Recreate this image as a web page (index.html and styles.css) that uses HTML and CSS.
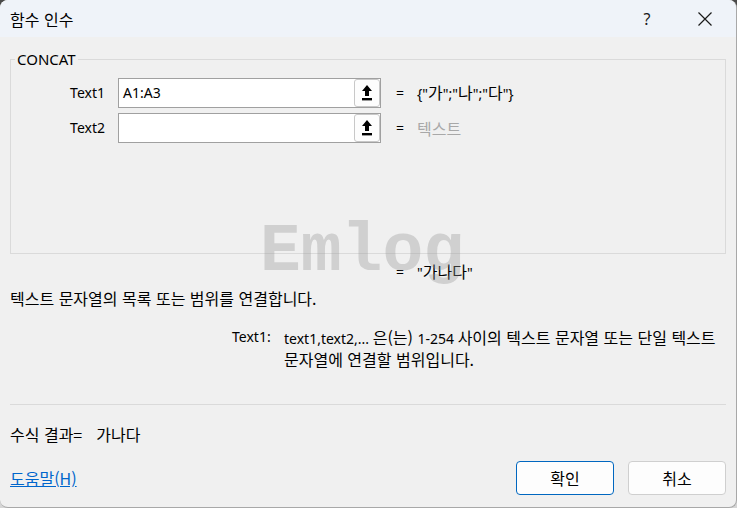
FILE: index.html
```html
<!DOCTYPE html>
<html lang="ko">
<head>
<meta charset="utf-8">
<title>함수 인수</title>
<link rel="stylesheet" href="styles.css">
</head>
<body>
<div class="window">
  <div class="titlebar">
    <span class="title ko">함수 인수</span>
    <span class="help">?</span>
    <span class="close">
      <svg width="16" height="16" viewBox="0 0 16 16"><path d="M1.5 1.5 L14.5 14.5 M14.5 1.5 L1.5 14.5" stroke="#1a1a1a" stroke-width="1.2" fill="none"/></svg>
    </span>
  </div>

  <div class="content">
    <fieldset class="group">
      <legend>CONCAT</legend>
      <div class="args">
        <label class="arg-label">Text1</label>
        <div class="ref-input">
          <span class="ref-text">A1:A3</span>
          <button class="ref-btn" type="button">
            <svg width="12" height="18" viewBox="0 0 12 18"><path d="M6 1 L11 7 H8 V12 H4 V7 H1 Z" fill="#000"/><rect x="1" y="14" width="10" height="2.4" fill="#000"/></svg>
          </button>
        </div>
        <span class="eq">=</span>
        <span class="arg-value"><span>{"</span><span class="ko">가</span><span>";"</span><span class="ko">나</span><span>";"</span><span class="ko">다</span><span>"}</span></span>

        <label class="arg-label">Text2</label>
        <div class="ref-input">
          <span class="ref-text"></span>
          <button class="ref-btn" type="button">
            <svg width="12" height="18" viewBox="0 0 12 18"><path d="M6 1 L11 7 H8 V12 H4 V7 H1 Z" fill="#000"/><rect x="1" y="14" width="10" height="2.4" fill="#000"/></svg>
          </button>
        </div>
        <span class="eq">=</span>
        <span class="arg-value muted ko">텍스트</span>
      </div>
    </fieldset>

    <div class="result-row">
      <span class="eq">=</span>
      <span class="arg-value"><span>"</span><span class="ko">가나다</span><span>"</span></span>
    </div>

    <p class="desc ko">텍스트 문자열의 목록 또는 범위를 연결합니다.</p>

    <div class="arg-help">
      <span class="arg-help-name">Text1:</span>
      <span class="arg-help-text"><span>text1,text2,... </span><span class="ko">은(는) </span><span>1-254 </span><span class="ko">사이의 텍스트 문자열 또는 단일 텍스트 문자열에 연결할 범위입니다.</span></span>
    </div>

    <div class="separator"></div>

    <div class="formula-result ko">
      <span>수식 결과=</span>
      <span class="formula-value">가나다</span>
    </div>

    <div class="footer">
      <a class="help-link ko" href="#">도움말(H)</a>
      <div class="buttons">
        <button class="btn default ko" type="button">확인</button>
        <button class="btn ko" type="button">취소</button>
      </div>
    </div>
  </div>

  <div class="watermark">Emlog</div>
</div>
</body>
</html>
```

FILE: styles.css
```css
html, body {
  margin: 0;
  padding: 0;
}

body {
  width: 737px;
  height: 508px;
  background: linear-gradient(#4a4a4a, #9a9a9a 60%, #d6d6d6);
  font-family: "Noto Sans", "Noto Sans CJK KR", sans-serif;
  font-size: 14px;
  line-height: 20px;
  color: #000;
  overflow: hidden;
}

/* hangul runs are set a little larger than the latin text */
.ko {
  font-family: "Noto Sans CJK KR", sans-serif;
  font-size: 16px;
}

.window {
  position: relative;
  width: 736px;
  height: 507px;
  background: #f0f0f0;
  border-right: 1px solid #a8a8a8;
  border-bottom: 1px solid #a8a8a8;
  border-radius: 8px;
  overflow: hidden;
}

/* title bar */
.titlebar {
  height: 37px;
  background: #eff3f9;
  display: flex;
  align-items: center;
}

.title {
  margin-left: 10px;
  flex: 1;
}

.help {
  font-size: 16px;
  color: #1a1a1a;
  width: 46px;
  text-align: center;
  margin-right: 12px;
}

.close {
  width: 46px;
  display: flex;
  justify-content: center;
  margin-right: 8px;
}

/* dialog body */
.content {
  padding: 13px 10px 0 10px;
}

.group {
  margin: 0;
  padding: 0;
  height: 204px;
  border: 1px solid #dadada;
  box-sizing: border-box;
}

.group legend {
  margin-left: 4px;
  padding: 0 2px;
  font-size: 15px;
  line-height: 18px;
}

.args {
  display: grid;
  grid-template-columns: 94px 276px auto 1fr;
  grid-auto-rows: 30px;
  row-gap: 5px;
  margin-top: 10px;
  align-items: center;
}

.arg-label {
  text-align: right;
}

.ref-input {
  margin-left: 13px;
  height: 30px;
  box-sizing: border-box;
  background: #fff;
  border: 1px solid #a0a0a0;
  display: flex;
  align-items: center;
}

.ref-text {
  flex: 1;
  padding-left: 4px;
}

.ref-btn {
  width: 26px;
  height: 28px;
  margin: 0;
  padding: 0;
  border: 1px solid #c8c8c8;
  border-radius: 3px;
  background: #fdfdfd;
  display: flex;
  align-items: center;
  justify-content: center;
}

.eq {
  margin-left: 15px;
  width: 21px;
}

.arg-value {
  white-space: nowrap;
}

.muted {
  color: #a8a8a8;
}

.result-row {
  display: flex;
  height: 26px;
  align-items: center;
  padding-left: 371px;
  margin-top: 5px;
}

.desc {
  margin: 0;
  height: 26px;
  line-height: 26px;
}

.arg-help {
  display: flex;
  margin-top: 16px;
  height: 40px;
  line-height: 20px;
  padding-left: 222px;
}

.arg-help-name {
  width: 52px;
  flex: none;
}

.arg-help-text {
  width: 445px;
}

.separator {
  height: 1px;
  background: #dadada;
  margin-top: 37px;
}

.formula-result {
  display: flex;
  height: 26px;
  align-items: center;
  margin-top: 16px;
}

.formula-value {
  margin-left: 14px;
}

.footer {
  display: flex;
  align-items: center;
  justify-content: space-between;
  margin-top: 14px;
}

.help-link {
  color: #0066cc;
  text-decoration: underline;
}

.buttons {
  display: flex;
  gap: 14px;
}

.btn {
  width: 98px;
  height: 34px;
  padding: 0;
  background: #fdfdfd;
  border: 1px solid #cfcfcf;
  border-radius: 4px;
  color: #000;
}

.btn.default {
  border-color: #0067c0;
}

/* translucent stamp laid over the dialog */
.watermark {
  position: absolute;
  left: 260px;
  top: 218px;
  font-family: "Liberation Mono", monospace;
  font-weight: bold;
  font-size: 68px;
  line-height: 68px;
  color: rgba(150, 150, 150, 0.35);
  pointer-events: none;
}
```
